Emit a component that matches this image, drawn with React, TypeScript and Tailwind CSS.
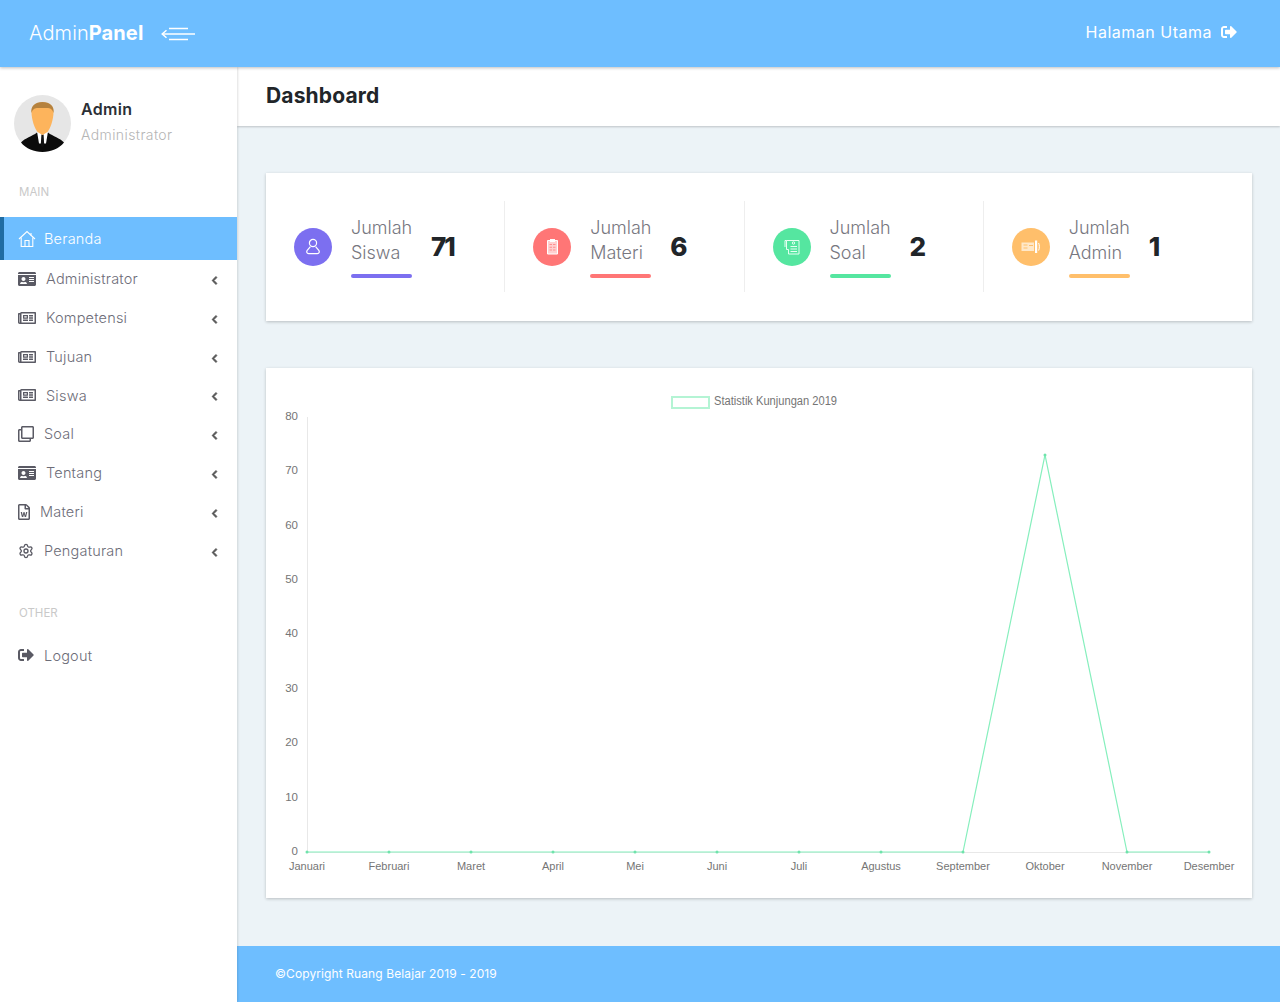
import { FaChevronLeft, FaIdCard, FaRegClone, FaRegFileWord, FaRegNewspaper, FaSignOutAlt } from "react-icons/fa";
import { Settings } from "lucide-react";
import type { ReactNode } from "react";

const font = { fontFamily: "Inter, 'Open Sans', sans-serif" };

function HomeIcon() {
  return (
    <svg width="18" height="18" viewBox="0 0 18 18" fill="none" stroke="currentColor" strokeWidth="1.1" className="mr-[8px] shrink-0">
      <path d="M1 9 9 1.5 17 9" />
      <path d="M3.2 7.4V16.5H14.8V7.4" />
      <path d="M7 16.5V10.5H11V16.5" />
      <path d="M13 3V5.4" />
    </svg>
  );
}

function MenuArrow() {
  return (
    <svg width="34" height="14" viewBox="0 0 34 14" fill="none" stroke="white" strokeWidth="1.5">
      <path d="M8 1.5H27" />
      <path d="M1 7H34" />
      <path d="M8 12.5H27" />
      <path d="M5.5 3.2 1.2 7l4.3 3.8" />
    </svg>
  );
}

function Avatar() {
  return (
    <svg width="57" height="57" viewBox="0 0 57 57" className="shrink-0">
      <circle cx="28.5" cy="28.5" r="28.5" fill="#e6e6e6" />
      <path d="M7 47.5C11 43 18 41.5 23 37.5H34C39 41.5 46 43 50 47.5C45 53.5 37 57 28.5 57C20 57 12 53.5 7 47.5Z" fill="#0b0b0b" />
      <path d="M23 36.5H34L32 48.5H25Z" fill="#fff" />
      <path d="M27.4 39.5H29.6L30.2 50L28.5 52.5L26.8 50Z" fill="#111" />
      <path d="M17.5 17C17.5 10 22 7.5 28.5 7.5C35 7.5 39.5 10 39.5 17C39.5 25 36 34 33.5 37L28.5 40L23.5 37C21 34 17.5 25 17.5 17Z" fill="#fdb45c" />
      <path d="M17.5 18C16.5 11 21 7 28.5 7C36 7 40.5 11 39.5 18C38.5 14 36 13 33 13H24C21 13 18.5 14 17.5 18Z" fill="#b5823f" />
    </svg>
  );
}

function UserGlyph() {
  return (
    <svg width="16" height="17" viewBox="0 0 16 17" fill="none" stroke="white" strokeWidth="1.2">
      <circle cx="8" cy="5" r="3.6" />
      <path d="M5.4 8.6 2.2 12.4C1.2 13.8 1.8 15.6 3.6 15.6H12.4C14.2 15.6 14.8 13.8 13.8 12.4L10.6 8.6" />
    </svg>
  );
}

function ClipboardGlyph() {
  return (
    <svg width="13" height="17" viewBox="0 0 13 17" fill="none">
      <path d="M1.5 2.5H11.5V16H1.5Z" fill="#ffd0d0" stroke="#fff" />
      <path d="M4 1H9V4H4Z" fill="#fff" />
      <path d="M3.5 6.5H6M7 6.5H9.5M3.5 9.2H6M7 9.2H9.5M3.5 12H6M7 12H9.5" stroke="#ff8f8f" strokeWidth="1.1" />
    </svg>
  );
}

function PaperGlyph() {
  return (
    <svg width="16" height="16" viewBox="0 0 16 16" fill="none" stroke="#e6fff2" strokeWidth="1">
      <path d="M4.5 10.5H2.5V1.5H15V15H4.5Z" />
      <path d="M2.5 1.5H1V8" />
      <path d="M6.5 7.5H13M6.5 10H13M6.5 12.5H13" />
      <circle cx="9.5" cy="4" r="1.2" />
    </svg>
  );
}

function TicketGlyph() {
  return (
    <svg width="19" height="15" viewBox="0 0 19 15" fill="none">
      <path d="M0.5 3.5H13V12H0.5Z" fill="#ffe8c9" />
      <path d="M2.5 6H6.5M2.5 9H6.5M8 6.5H12" stroke="#ffbf6b" strokeWidth="1.1" />
      <path d="M14 1.5H16.2V14H14Z" fill="#fff" />
      <path d="M17.6 4C18.6 6 18.6 9.5 17.6 11.5" stroke="#fff" />
    </svg>
  );
}

function MenuItem({ icon, label }: { icon: ReactNode; label: string }) {
  return (
    <div className="flex h-[38.85px] items-center pb-[1px] pl-[18px] pr-[18px] text-[#5a5a64]">
      {icon}
      <span className="text-[14.5px] font-light tracking-[0.2px] text-[#6d6d78]">{label}</span>
      <FaChevronLeft size={9} stroke="currentColor" strokeWidth={50} className="ml-auto mt-[3px] text-[#555]" />
    </div>
  );
}

const stats = [
  { label: "Siswa", value: "71", color: "#7c6ff0", glyph: <UserGlyph /> },
  { label: "Materi", value: "6", color: "#ff7676", glyph: <ClipboardGlyph /> },
  { label: "Soal", value: "2", color: "#55e6a0", glyph: <PaperGlyph /> },
  { label: "Admin", value: "1", color: "#ffbf6b", glyph: <TicketGlyph /> },
];

const months = ["Januari", "Februari", "Maret", "April", "Mei", "Juni", "Juli", "Agustus", "September", "Oktober", "November", "Desember"];
const visits = [0, 0, 0, 0, 0, 0, 0, 0, 0, 73, 0, 0];

// same coordinates as the card: card starts at x=266, y=368 on the page
function Chart() {
  const x = (i: number) => 41 + i * 82;
  const y = (v: number) => 484 - v * 5.44;
  const line = visits.map((v, i) => `${x(i)},${y(v)}`).join(" ");
  return (
    <svg width="986" height="530" viewBox="0 0 986 530" className="block" style={{ fontFamily: "'Liberation Sans', Arial, sans-serif" }}>
      <rect x="406" y="29" width="37" height="11" fill="#fff" stroke="#b4f4d4" strokeWidth="2" />
      <text x="448" y="37" fontSize="12" fill="#757575" textLength="123" lengthAdjust="spacingAndGlyphs">Statistik Kunjungan 2019</text>
      <path d="M41.5 49V484" stroke="#e8e8e8" fill="none" />
      <path d="M41 484.5H943" stroke="#e8e8e8" fill="none" />
      {[0, 10, 20, 30, 40, 50, 60, 70, 80].map((v) => (
        <text key={v} x="32" y={y(v) + 3} fontSize="11.5" fill="#757575" textAnchor="end">{v}</text>
      ))}
      {months.map((m, i) => (
        <text key={m} x={x(i)} y="502" fontSize="11" fill="#757575" textAnchor="middle">{m}</text>
      ))}
      <polyline points={line} fill="none" stroke="#86efbd" strokeWidth="1.2" />
      {visits.map((v, i) => (
        <circle key={i} cx={x(i)} cy={y(v)} r="1.5" fill="#6fe3ab" />
      ))}
    </svg>
  );
}

export default function App() {
  return (
    <div className="flex min-h-[1002px] flex-col bg-[#ecf3f7]" style={font}>
      <header className="relative z-20 flex h-[67px] items-center bg-[#6ebeff] pl-[29px] pr-[43px] text-white shadow-[0_1px_3px_rgba(0,0,0,0.25)]">
        <div className="mb-[2px] text-[20px] tracking-[0.1px]">
          <span className="font-light">Admin</span>
          <span className="font-bold">Panel</span>
        </div>
        <div className="ml-[18px]"><MenuArrow /></div>
        <div className="mb-[3px] ml-auto flex items-center text-[16px] font-normal tracking-[0.5px]">
          <span>Halaman Utama</span>
          <FaSignOutAlt size={16} className="ml-[9px]" />
        </div>
      </header>

      <div className="flex flex-1">
        <aside className="relative z-10 w-[237px] shrink-0 bg-white pt-[28px] shadow-[1px_0_2px_rgba(0,0,0,0.12)]">
          <div className="flex items-center gap-[10px] pl-[14px]">
            <Avatar />
            <div className="mt-[-3px]">
              <div className="text-[16px] font-semibold leading-[20px] tracking-[0.3px] text-[#2b2f36]">Admin</div>
              <div className="mt-[6px] text-[14px] font-light leading-[20px] tracking-[0.4px] text-[#b5b5b5]">Administrator</div>
            </div>
          </div>
          <div className="mt-[32px] h-[16px] pl-[19px] text-[11.5px] leading-[16px] text-[#c9c9c9]">MAIN</div>
          <div className="mt-[17px] flex h-[43px] items-center border-l-[4px] border-[#1f6ca3] bg-[#6ebeff] pl-[14px] text-white">
            <HomeIcon />
            <span className="text-[14.5px] font-light tracking-[0.2px]">Beranda</span>
          </div>
          <MenuItem icon={<FaIdCard size={18} className="mr-[10px]" />} label="Administrator" />
          <MenuItem icon={<FaRegNewspaper size={18} className="mr-[10px]" />} label="Kompetensi" />
          <MenuItem icon={<FaRegNewspaper size={18} className="mr-[10px]" />} label="Tujuan" />
          <MenuItem icon={<FaRegNewspaper size={18} className="mr-[10px]" />} label="Siswa" />
          <MenuItem icon={<FaRegClone size={16} className="mr-[10px]" />} label="Soal" />
          <MenuItem icon={<FaIdCard size={18} className="mr-[10px]" />} label="Tentang" />
          <MenuItem icon={<FaRegFileWord size={16} className="mr-[10px] w-[12px]" />} label="Materi" />
          <MenuItem icon={<Settings size={16} strokeWidth={2} className="mr-[10px]" />} label="Pengaturan" />
          <div className="mt-[34.2px] h-[16px] pl-[19px] text-[11.5px] leading-[16px] text-[#c9c9c9]">OTHER</div>
          <div className="mt-[16px] flex h-[39px] items-center pb-[2px] pl-[18px] text-[#5a5a64]">
            <FaSignOutAlt size={16} className="mr-[10px]" />
            <span className="text-[14.5px] font-light tracking-[0.2px] text-[#6d6d78]">Logout</span>
          </div>
        </aside>

        <main className="flex min-w-0 flex-1 flex-col">
          <div className="flex h-[59px] items-center bg-white pb-[1px] pl-[29px] shadow-[0_1px_2px_rgba(0,0,0,0.2)]">
            <h1 className="text-[21px] font-bold tracking-[0.15px] text-[#212529]">Dashboard</h1>
          </div>

          <div className="flex-1 pb-[48px] pl-[29px] pr-[28px] pt-[47px]">
            <section className="flex h-[148px] items-start bg-white pr-[29px] pt-[28px] shadow-[0_1px_3px_rgba(0,0,0,0.22)]">
              {stats.map((s, i) => (
                <div key={s.label} className={`flex h-[91px] w-[239.25px] items-center pl-[28px] ${i < 3 ? "border-r border-[#eeeeee]" : ""}`}>
                  <div className="flex h-[38px] w-[38px] shrink-0 items-center justify-center rounded-full" style={{ backgroundColor: s.color }}>
                    {s.glyph}
                  </div>
                  <div className="ml-[19px] mt-[-1px] w-[61px]">
                    <div className="text-[18px] font-light leading-[25px] text-[#77777f]">Jumlah</div>
                    <div className="text-[18px] font-light leading-[25px] text-[#77777f]">{s.label}</div>
                    <div className="mt-[9px] h-[4px] rounded-full" style={{ backgroundColor: s.color }} />
                  </div>
                  <div className="ml-[19px] mt-[-1px] text-[26px] font-extrabold tracking-[-2px] text-[#212529]">{s.value}</div>
                </div>
              ))}
            </section>

            <section className="mt-[47px] h-[530px] bg-white shadow-[0_1px_3px_rgba(0,0,0,0.22)]">
              <Chart />
            </section>
          </div>

          <footer className="flex h-[56px] items-center bg-[#6ebeff] pl-[38px] text-[12px] tracking-[0.1px] text-white">
            ©Copyright Ruang Belajar 2019 - 2019
          </footer>
        </main>
      </div>
    </div>
  );
}
